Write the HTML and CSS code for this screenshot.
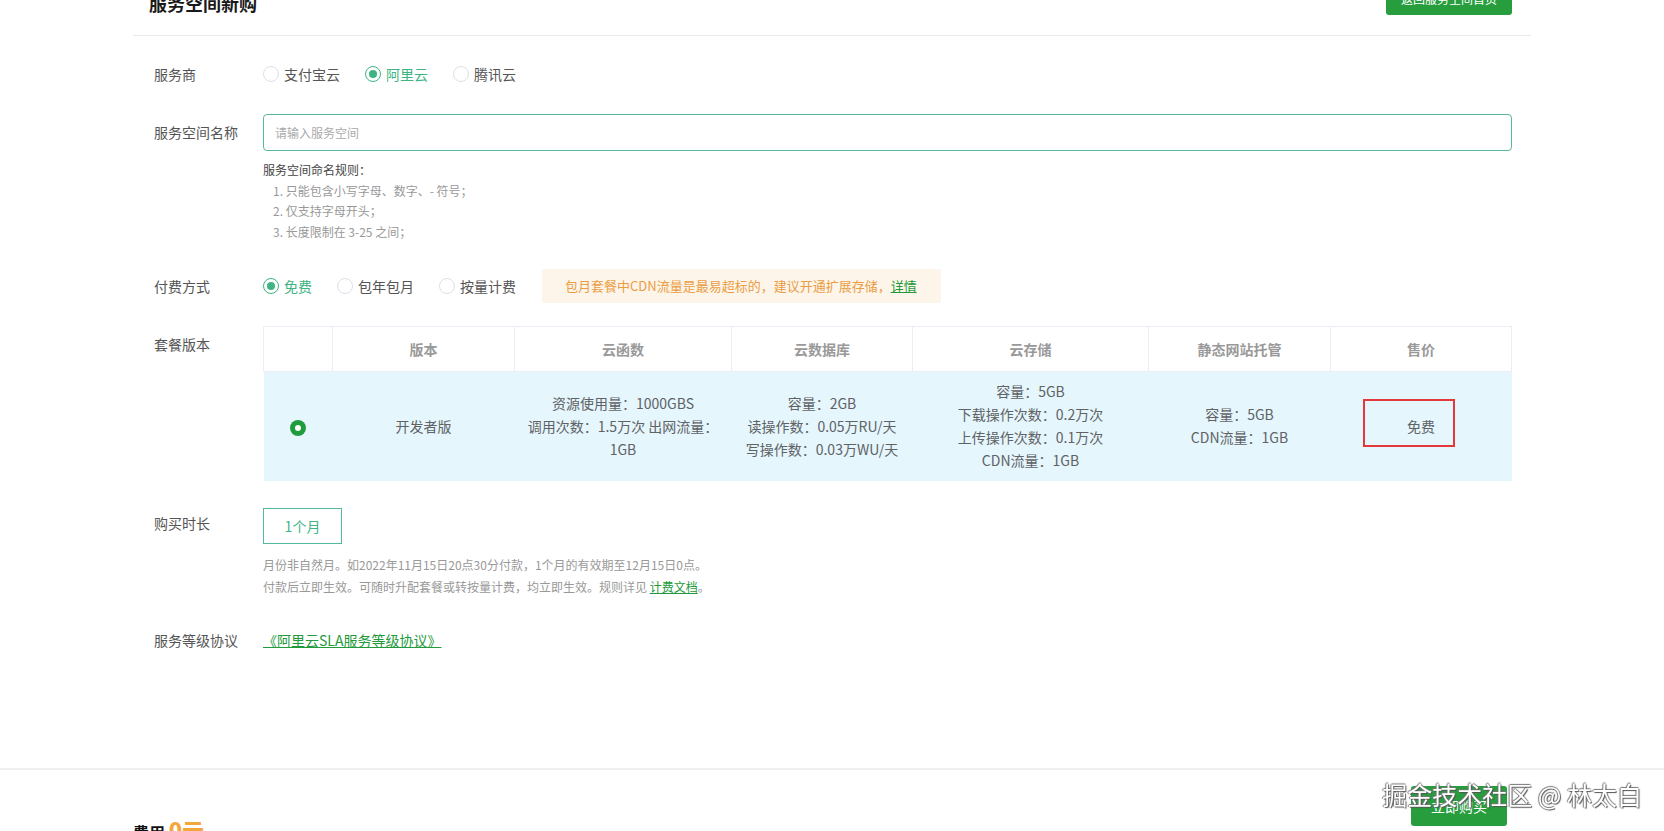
FILE: index.html
```html
<!DOCTYPE html>
<html lang="zh-CN">
<head>
    <meta charset="UTF-8">
    <meta name="viewport" content="width=device-width, initial-scale=1.0">
    <title>服务空间新购</title>
    <link rel="stylesheet" href="styles.css">
</head>
<body>
    <div class="page">
        <div class="head">
            <h2>服务空间新购</h2>
            <a class="btn" href="#">返回服务空间首页</a>
        </div>

        <div class="form">
            <div class="row first">
                <div class="label">服务商</div>
                <div class="field radios">
                    <span class="radio"><i></i>支付宝云</span>
                    <span class="radio on"><i></i>阿里云</span>
                    <span class="radio"><i></i>腾讯云</span>
                </div>
            </div>

            <div class="row">
                <div class="label">服务空间名称</div>
                <div class="field">
                    <input class="input" type="text" placeholder="请输入服务空间">
                    <div class="rules">
                        <p class="rules-title">服务空间命名规则：</p>
                        <p>1. 只能包含小写字母、数字、- 符号；</p>
                        <p>2. 仅支持字母开头；</p>
                        <p>3. 长度限制在 3-25 之间；</p>
                    </div>
                </div>
            </div>

            <div class="row pay">
                <div class="label">付费方式</div>
                <div class="field radios">
                    <span class="radio on"><i></i>免费</span>
                    <span class="radio"><i></i>包年包月</span>
                    <span class="radio"><i></i>按量计费</span>
                    <div class="notice">包月套餐中CDN流量是最易超标的，建议开通扩展存储，<a href="#">详情</a></div>
                </div>
            </div>

            <div class="row">
                <div class="label">套餐版本</div>
                <div class="field">
                    <table class="plans">
                        <thead>
                            <tr>
                                <th class="c-pick"></th>
                                <th class="c-name">版本</th>
                                <th class="c-fn">云函数</th>
                                <th class="c-db">云数据库</th>
                                <th class="c-store">云存储</th>
                                <th class="c-host">静态网站托管</th>
                                <th class="c-price">售价</th>
                            </tr>
                        </thead>
                        <tbody>
                            <tr>
                                <td><span class="pick"></span></td>
                                <td>开发者版</td>
                                <td>资源使用量：1000GBS<br>调用次数：1.5万次 出网流量：<br>1GB</td>
                                <td>容量：2GB<br>读操作数：0.05万RU/天<br>写操作数：0.03万WU/天</td>
                                <td>容量：5GB<br>下载操作次数：0.2万次<br>上传操作次数：0.1万次<br>CDN流量：1GB</td>
                                <td>容量：5GB<br>CDN流量：1GB</td>
                                <td class="price">免费<span class="mark"></span></td>
                            </tr>
                        </tbody>
                    </table>
                </div>
            </div>

            <div class="row buy">
                <div class="label">购买时长</div>
                <div class="field">
                    <span class="dur">1个月</span>
                    <div class="notes">
                        <p>月份非自然月。如2022年11月15日20点30分付款，1个月的有效期至12月15日0点。</p>
                        <p>付款后立即生效。可随时升配套餐或转按量计费，均立即生效。规则详见 <a href="#">计费文档</a>。</p>
                    </div>
                </div>
            </div>

            <div class="row sla">
                <div class="label">服务等级协议</div>
                <div class="field">
                    <a class="sla-link" href="#">《阿里云SLA服务等级协议》</a>
                </div>
            </div>
        </div>
    </div>

    <div class="footer">
        <div class="footer-in">
            <div class="cost">费用 <b>0元</b></div>
            <a class="btn buy-btn" href="#">立即购买</a>
        </div>
    </div>

    <div class="watermark">掘金技术社区 @ 林太白</div>
</body>
</html>
```

FILE: styles.css
```css
* {
    box-sizing: border-box;
}
html, body {
    height: 100%;
    overflow: hidden;
}
body {
    margin: 0;
    font-family: "Noto Sans CJK SC", "Noto Sans", sans-serif;
    font-size: 14px;
    color: #555;
    background: #fff;
}
p {
    margin: 0;
}
a {
    color: #229a3b;
}
.page {
    margin: 0 133px;
}
.head {
    display: flex;
    justify-content: space-between;
    align-items: flex-end;
    margin-top: -17px;
    padding: 0 19px 20px 16px;
    border-bottom: 1px solid #ebebeb;
}
.head h2 {
    margin: 0;
    font-size: 18px;
    line-height: 24px;
    color: #1a1a1a;
}
.btn {
    display: inline-block;
    height: 32px;
    line-height: 32px;
    padding: 0 15px;
    background: #279d3e;
    color: #fff;
    font-size: 12px;
    border-radius: 3px;
    text-decoration: none;
}
.form {
    padding: 0 19px 0 21px;
}
.row {
    display: flex;
    align-items: flex-start;
    margin-top: 22px;
}
.row.first {
    margin-top: 20px;
}
.label {
    width: 109px;
    flex: none;
    line-height: 36px;
    color: #555;
}
.field {
    flex: 1;
    min-width: 0;
}
.radios {
    display: flex;
    align-items: center;
    height: 36px;
}
.radio {
    display: flex;
    align-items: center;
    margin-right: 25px;
    color: #555;
}
.radio i {
    width: 16px;
    height: 16px;
    margin-right: 5px;
    border: 1px solid #dcdfe6;
    border-radius: 50%;
    position: relative;
}
.radio.on {
    color: #3db482;
}
.radio.on i {
    border-color: #3db482;
}
.radio.on i::after {
    content: "";
    position: absolute;
    left: 3px;
    top: 3px;
    width: 8px;
    height: 8px;
    border-radius: 50%;
    background: #3db482;
}
.input {
    display: block;
    width: 100%;
    height: 37px;
    padding: 0 11px;
    border: 1px solid #55b79d;
    border-radius: 4px;
    font-family: inherit;
    font-size: 12px;
    color: #333;
    outline: none;
}
.input::placeholder {
    color: #aaa;
}
.rules {
    margin-top: 9px;
    font-size: 12px;
    line-height: 20.5px;
    color: #999;
}
.rules p {
    padding-left: 10px;
}
.rules .rules-title {
    padding-left: 0;
    color: #444;
}
.row.pay {
    margin-top: 26px;
}
.notice {
    height: 34px;
    line-height: 34px;
    margin-left: 1px;
    padding: 0 24px 0 23px;
    background: #fdf5e9;
    color: #eb9d45;
    font-size: 13px;
    border-radius: 2px;
}
.notice a {
    color: #229a3b;
}
.plans {
    width: 100%;
    border-collapse: collapse;
    table-layout: fixed;
    text-align: center;
}
.plans th {
    height: 45px;
    border: 1px solid #ebeef5;
    color: #999;
    font-weight: bold;
}
.c-pick { width: 69px; }
.c-name { width: 182px; }
.c-fn { width: 217px; }
.c-db { width: 181px; }
.c-store { width: 236px; }
.c-host { width: 182px; }
.plans td {
    padding: 8px 4px;
    height: 109px;
    line-height: 23px;
    background: #e5f6fc;
    color: #606266;
}
.pick {
    display: inline-block;
    width: 16px;
    height: 16px;
    border-radius: 50%;
    background: #1f9d3c;
    position: relative;
    vertical-align: middle;
}
.pick::after {
    content: "";
    position: absolute;
    left: 5px;
    top: 5px;
    width: 6px;
    height: 6px;
    border-radius: 50%;
    background: #fff;
}
.price {
    position: relative;
}
.mark {
    position: absolute;
    left: 32px;
    top: 27px;
    width: 92px;
    height: 48px;
    border: 2px solid #e5383b;
}
.row.buy {
    margin-top: 27px;
}
.row.buy .label {
    line-height: 30px;
}
.dur {
    display: inline-block;
    width: 79px;
    height: 36px;
    line-height: 34px;
    border: 1px solid #55b79d;
    color: #3db482;
    text-align: center;
}
.notes {
    margin-top: 10px;
    font-size: 12px;
    line-height: 22px;
    color: #999;
}
.row.sla {
    margin-top: 24px;
}
.sla-link {
    line-height: 36px;
}
.footer {
    margin-top: 110px;
    height: 70px;
    border-top: 2px solid #efefef;
    overflow: hidden;
}
.footer-in {
    display: flex;
    justify-content: space-between;
    align-items: flex-start;
    margin: 0 157px 0 133px;
}
.cost {
    padding-top: 43px;
    font-size: 16px;
    font-weight: bold;
    color: #111;
}
.cost b {
    font-size: 22px;
    color: #f3a63b;
}
.buy-btn {
    margin-top: 16px;
    height: 40px;
    line-height: 40px;
    padding: 0 20px;
    font-size: 14px;
}
.watermark {
    position: fixed;
    right: 22px;
    bottom: 22px;
    font-size: 25px;
    line-height: 30px;
    color: #fff;
    text-shadow: 1px 1px 1px #555, -1px 0 1px #777, 0 -1px 1px #777;
}
```
